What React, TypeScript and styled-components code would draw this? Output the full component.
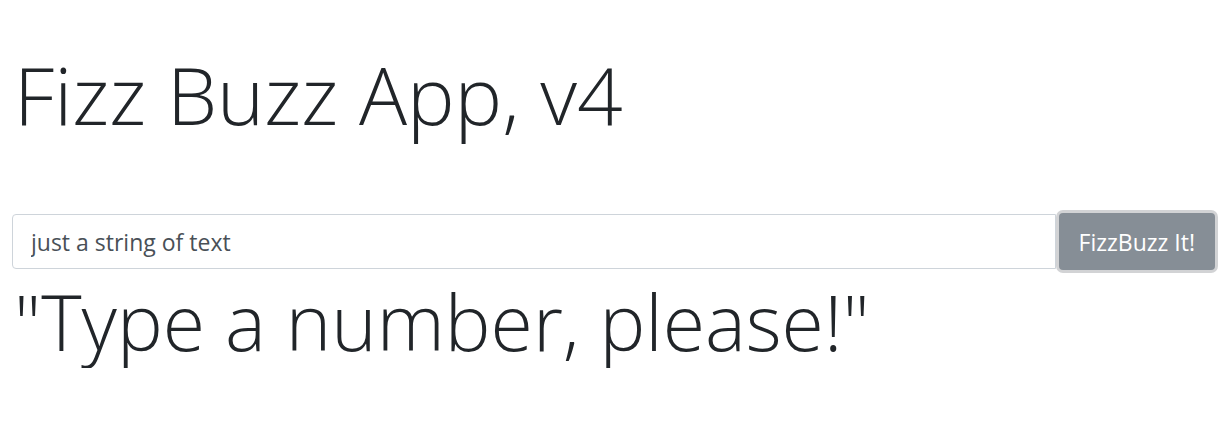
import styled, { createGlobalStyle } from 'styled-components'

const GlobalStyle = createGlobalStyle`
  html, body {
    margin: 0;
    padding: 0;
    background: #fff;
  }
  body {
    font-family: 'Open Sans', 'Noto Sans', sans-serif;
    color: #212529;
  }
`

const Page = styled.div`
  display: flex;
  flex-direction: column;
  padding: 0 17px 0 12px;
`

const Title = styled.h1`
  margin: 46px 0 0 2px;
  font-size: 80px;
  font-weight: 300;
  line-height: 1.2;
  color: #212529;
`

const InputGroup = styled.div`
  display: flex;
  align-items: center;
  margin-top: 71px;
`

const TextField = styled.input`
  flex: 1;
  height: 55px;
  box-sizing: border-box;
  padding: 0 18px;
  border: 1px solid #ced4da;
  border-radius: 4px 0 0 4px;
  font-family: 'Open Sans', 'Noto Sans', sans-serif;
  font-size: 23px;
  color: #495057;
  outline: none;
`

const SubmitButton = styled.button`
  height: 57px;
  box-sizing: border-box;
  padding: 0 20px;
  margin-left: 3px;
  border: none;
  border-radius: 4px;
  background: #868e96;
  color: #fff;
  font-family: 'Open Sans', 'Noto Sans', sans-serif;
  font-size: 23px;
  box-shadow: 0 0 0 3px #d2d3d5;
`

const Result = styled.p`
  margin: 6px 0 0 2px;
  font-size: 77px;
  font-weight: 300;
  line-height: 1.2;
  color: #212529;
`

export default function App() {
  return (
    <>
      <GlobalStyle />
      <Page>
        <Title>Fizz Buzz App, v4</Title>
        <InputGroup>
          <TextField defaultValue="just a string of text" />
          <SubmitButton>FizzBuzz It!</SubmitButton>
        </InputGroup>
        <Result>"Type a number, please!"</Result>
      </Page>
    </>
  )
}
